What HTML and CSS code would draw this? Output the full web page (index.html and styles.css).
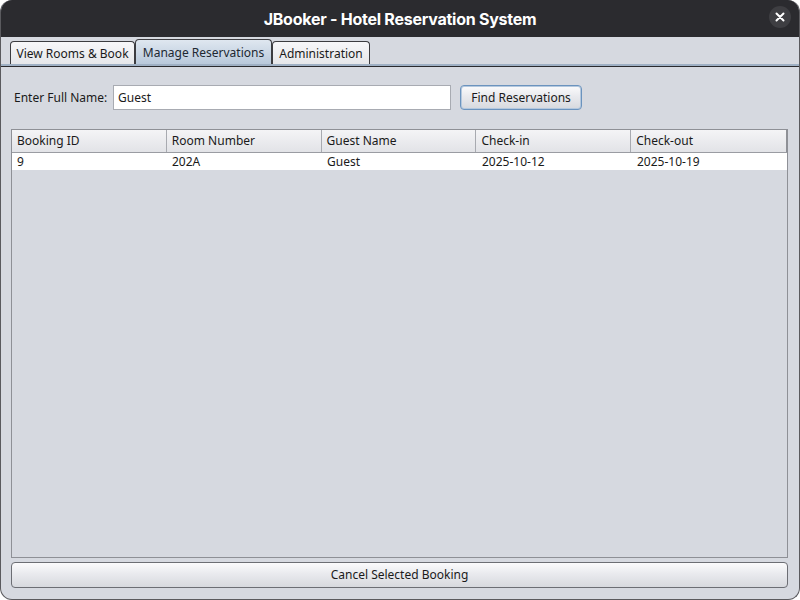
FILE: index.html
```html
<!DOCTYPE html>
<html>
<head>
<meta charset="utf-8">
<link rel="stylesheet" href="styles.css">
</head>
<body>
<div class="window">
  <div class="titlebar">
    <span class="title">JBooker - Hotel Reservation System</span>
    <span class="close"><svg width="10" height="10" viewBox="0 0 10 10"><path d="M1.5 1.5 L8.5 8.5 M8.5 1.5 L1.5 8.5" stroke="#fff" stroke-width="2" stroke-linecap="round"/></svg></span>
  </div>
  <div class="tabs">
    <div class="tab t1">View Rooms &amp; Book</div>
    <div class="tab t2 selected">Manage Reservations</div>
    <div class="tab t3">Administration</div>
  </div>
  <div class="panel">
    <div class="search">
      <label class="lbl">Enter Full Name:</label>
      <div class="field">Guest</div>
      <div class="btn find">Find Reservations</div>
    </div>
    <div class="table">
      <div class="thead">
        <div class="th">Booking ID</div>
        <div class="th">Room Number</div>
        <div class="th">Guest Name</div>
        <div class="th">Check-in</div>
        <div class="th last">Check-out</div>
      </div>
      <div class="row">
        <div class="td">9</div>
        <div class="td">202A</div>
        <div class="td">Guest</div>
        <div class="td">2025-10-12</div>
        <div class="td">2025-10-19</div>
      </div>
    </div>
    <div class="btn cancel">Cancel Selected Booking</div>
  </div>
</div>
</body>
</html>
```
FILE: styles.css
```css
html, body { margin: 0; padding: 0; background: #ffffff; }
body { font-family: "Noto Sans", "Open Sans", sans-serif; font-size: 12px; color: #1a1a1a; }
.window {
  width: 800px; height: 600px; box-sizing: border-box;
  background: #d6d9e0;
  border-radius: 12px;
  border: 1px solid #5a5a5e;
  border-top: none;
  overflow: hidden;
  display: flex; flex-direction: column;
}
.titlebar {
  height: 37px; flex: none;
  background: #2b2b2f;
  display: flex; align-items: center; justify-content: center;
  position: relative;
  margin: 0 -1px;
}
.title { color: #ffffff; font-family: Inter, "Noto Sans", sans-serif; font-weight: 700; font-size: 16px; letter-spacing: -0.25px; }
.close {
  position: absolute; right: 9px; top: 6px;
  width: 22px; height: 22px; border-radius: 50%;
  background: #3e3e42;
  display: flex; align-items: center; justify-content: center;
}
.tabs {
  display: flex; align-items: flex-end;
  padding: 0 0 0 9px; height: 27px; flex: none;
  border-bottom: 2px solid #9fb0c4;
}
.tab {
  height: 23px; box-sizing: border-box;
  border: 1px solid #3c3c40; border-bottom: none;
  border-radius: 4px 4px 0 0;
  background: linear-gradient(#f7f7f9, #e6e7ea);
  line-height: 23px;
  text-align: center;
  white-space: nowrap;
}
.t1 { width: 125px; }
.t2 { width: 137px; }
.t3 { width: 98px; }
.tab.selected {
  height: 25px; line-height: 25px;
  background: linear-gradient(#dfe7f0, #b9c9db);
  color: #202832;
}
.panel {
  flex: 1; display: flex; flex-direction: column;
  border-top: 1px solid #2a2a2e;
  padding: 18px 11px 11px 10px;
}
.search { display: flex; align-items: center; height: 25px; }
.lbl { margin-left: 3px; width: 99px; white-space: nowrap; }
.field {
  width: 338px; height: 25px; box-sizing: border-box;
  background: #fff; border: 1px solid #a8abb2;
  padding-left: 4px; line-height: 23px;
}
.btn {
  box-sizing: border-box; height: 25px;
  border-radius: 4px;
  background: linear-gradient(#fbfbfc, #e9eaee 45%, #d7d9de);
  text-align: center; line-height: 23px;
  white-space: nowrap;
}
.find {
  margin-left: 9px; width: 122px;
  border: 1px solid #6b93be;
  box-shadow: 0 0 0 1px #b4c8de inset;
}
.table {
  margin-top: 19px; flex: 1;
  border: 1px solid #8e9096;
  background: #d6d9e0;
}
.thead { display: flex; height: 22px; border-bottom: 1px solid #9a9ca2; background: linear-gradient(#f4f4f6, #e2e3e7); }
.th {
  width: 155px; box-sizing: border-box; padding-left: 5px;
  line-height: 21px; border-right: 1px solid #a8aab0;
}
.th.last { width: 156px; border-right: 1px solid #8e9096; }
.row { display: flex; height: 17px; background: #ffffff; }
.td { width: 155px; box-sizing: border-box; padding-left: 5px; line-height: 18px; }
.cancel {
  margin-top: 4px; height: 26px;
  border: 1px solid #6c6e74;
  line-height: 24px;
}
```
